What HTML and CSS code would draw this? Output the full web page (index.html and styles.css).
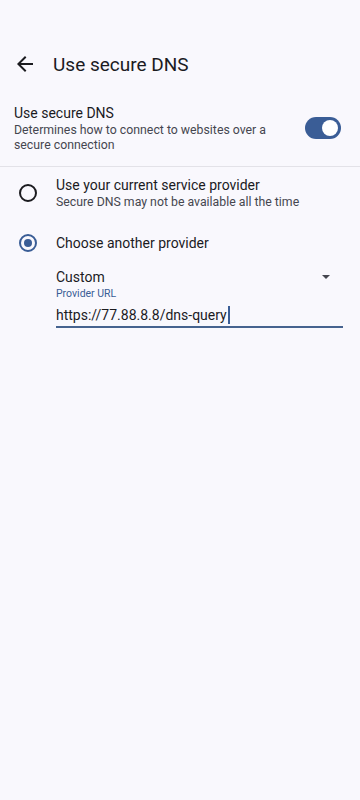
FILE: index.html
```html
<!DOCTYPE html>
<html lang="en">
<head>
  <meta charset="UTF-8">
  <title>Use secure DNS</title>
  <link rel="stylesheet" href="styles.css">
</head>
<body>
  <div class="toolbar">
    <svg class="back" width="24" height="24" viewBox="0 0 24 24"><path d="M20 11H7.83l5.59-5.59L12 4l-8 8 8 8 1.41-1.41L7.83 13H20v-2z" fill="#1b1b1f"/></svg>
    <h1>Use secure DNS</h1>
  </div>

  <div class="switch-row">
    <div class="switch-text">
      <div class="title">Use secure DNS</div>
      <div class="summary">Determines how to connect to websites over a secure connection</div>
    </div>
    <div class="toggle"><div class="knob"></div></div>
  </div>

  <div class="divider"></div>

  <div class="radio-row first">
    <div class="radio"></div>
    <div class="radio-text">
      <div class="title">Use your current service provider</div>
      <div class="summary">Secure DNS may not be available all the time</div>
    </div>
  </div>

  <div class="radio-row second">
    <div class="radio checked"><div class="dot"></div></div>
    <div class="radio-text">
      <div class="title">Choose another provider</div>
    </div>
  </div>

  <div class="provider">
    <div class="select">
      <span>Custom</span>
      <div class="caret"></div>
    </div>
    <div class="field-label">Provider URL</div>
    <div class="field">https://77.88.8.8/dns-query<span class="cursor"></span></div>
  </div>
</body>
</html>
```

FILE: styles.css
```css
body {
  margin: 0;
  background: #f9f8fd;
  font-family: Roboto, "Noto Sans", sans-serif;
  color: #1b1b1f;
  width: 360px;
  height: 800px;
}
.toolbar {
  display: flex;
  align-items: center;
  height: 56px;
  padding-top: 36px;
}
.back {
  margin-left: 13px;
}
h1 {
  margin: 0 0 0 16px;
  font-size: 19px;
  font-weight: 400;
}
.switch-row {
  display: flex;
  align-items: center;
  padding: 11px 19px 13px 14px;
}
.switch-text {
  flex: 1;
  padding-right: 30px;
}
.title {
  font-size: 14px;
  line-height: 20px;
}
.summary {
  font-size: 12.3px;
  line-height: 15px;
  color: #45464f;
}
.toggle {
  width: 36px;
  height: 22px;
  border-radius: 11px;
  background: #3a5d96;
  display: flex;
  align-items: center;
  justify-content: flex-end;
  padding: 0 3px;
  box-sizing: border-box;
}
.knob {
  width: 16px;
  height: 16px;
  border-radius: 50%;
  background: #fff;
}
.divider {
  height: 1px;
  background: #e3e2e8;
}
.radio-row {
  display: flex;
  align-items: center;
  padding-left: 19px;
}
.radio-row.first {
  margin-top: 8px;
}
.radio-row.second {
  margin-top: 23px;
}
.radio {
  width: 14px;
  height: 14px;
  border: 2px solid #1b1b1f;
  border-radius: 50%;
  display: flex;
  align-items: center;
  justify-content: center;
}
.radio.checked {
  border-color: #3a5d96;
}
.dot {
  width: 8px;
  height: 8px;
  border-radius: 50%;
  background: #3a5d96;
}
.radio-text {
  margin-left: 19px;
}
.provider {
  margin: 14px 17px 0 56px;
}
.select {
  display: flex;
  align-items: center;
  justify-content: space-between;
  font-size: 14px;
  line-height: 20px;
  padding-right: 13px;
}
.caret {
  width: 0;
  height: 0;
  border-left: 4.5px solid transparent;
  border-right: 4.5px solid transparent;
  border-top: 4.5px solid #45464f;
}
.field-label {
  font-size: 10.5px;
  line-height: 14px;
  color: #3a5d96;
}
.field {
  font-size: 14px;
  line-height: 20px;
  padding: 4px 0 1px;
  border-bottom: 2px solid #46638f;
  display: flex;
  align-items: center;
}
.cursor {
  width: 2px;
  height: 18px;
  background: #3a5d96;
  margin-left: 1px;
}
```
